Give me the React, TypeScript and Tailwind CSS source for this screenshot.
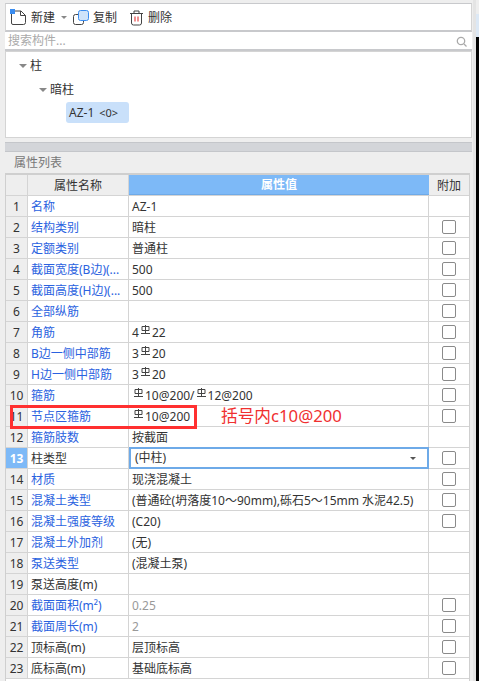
import { ReactNode } from "react";

const FONT = "font-['Noto_Sans','Noto_Sans_CJK_SC',sans-serif]";

function Rebar() {
  return (
    <svg width="11" height="11" viewBox="0 0 11 11" className="shrink-0 mx-px -mt-[4px]" fill="none" stroke="#444" strokeWidth="1">
      <path d="M2 1.5h7v4H2zM5.5 0v9M1 8.5h9" />
    </svg>
  );
}

interface Row {
  name: string;
  value?: ReactNode;
  blue?: boolean;
  gray?: boolean;
  check?: boolean;
}

const rows: Row[] = [
  { name: "名称", value: "AZ-1", blue: true },
  { name: "结构类别", value: "暗柱", blue: true, check: true },
  { name: "定额类别", value: "普通柱", blue: true, check: true },
  { name: "截面宽度(B边)(...", value: "500", blue: true, check: true },
  { name: "截面高度(H边)(...", value: "500", blue: true, check: true },
  { name: "全部纵筋", blue: true, check: true },
  { name: "角筋", value: <>4<Rebar />22</>, blue: true, check: true },
  { name: "B边一侧中部筋", value: <>3<Rebar />20</>, blue: true, check: true },
  { name: "H边一侧中部筋", value: <>3<Rebar />20</>, blue: true, check: true },
  { name: "箍筋", value: <><Rebar />10@200/<Rebar />12@200</>, blue: true, check: true },
  { name: "节点区箍筋", value: <><Rebar />10@200</>, blue: true, check: true },
  { name: "箍筋肢数", value: "按截面", blue: true },
  { name: "柱类型", value: "(中柱)", check: true },
  { name: "材质", value: "现浇混凝土", blue: true, check: true },
  { name: "混凝土类型", value: "(普通砼(坍落度10～90mm),砾石5～15mm 水泥42.5)", blue: true, check: true },
  { name: "混凝土强度等级", value: "(C20)", blue: true, check: true },
  { name: "混凝土外加剂", value: "(无)", blue: true },
  { name: "泵送类型", value: "(混凝土泵)", blue: true },
  { name: "泵送高度(m)" },
  { name: "截面面积(m²)", value: "0.25", blue: true, gray: true, check: true },
  { name: "截面周长(m)", value: "2", blue: true, gray: true, check: true },
  { name: "顶标高(m)", value: "层顶标高", check: true },
  { name: "底标高(m)", value: "基础底标高", check: true },
];

function Caret({ className }: { className: string }) {
  return <span className={`inline-block border-x-transparent ${className}`} />;
}

function PropertyRow({ row, index }: { row: Row; index: number }) {
  const active = index === 13;
  return (
    <div className="flex h-[21px] shrink-0 border-b border-[#d4d4d4]">
      <div className={`w-[22px] shrink-0 border-r border-[#d4d4d4] pt-px flex items-center justify-center ${active ? "bg-[#7db9f7] text-white font-bold" : "bg-[#eeeeee] text-[#333]"}`}>
        {index}
      </div>
      <div className={`w-[101px] shrink-0 border-r border-[#d4d4d4] pl-[3px] pt-px flex items-center whitespace-nowrap overflow-hidden ${row.blue ? "text-[#2a62e0]" : "text-[#333]"}`}>
        {row.name}
      </div>
      {active ? (
        <div className="w-[300px] shrink-0 border-2 border-[#6eaae8] -mt-px h-[22px] flex items-center justify-between pl-[4px] pr-[11px] text-[#333]">
          <span>{row.value}</span>
          <Caret className="border-x-[3px] border-t-[3px] border-t-[#555]" />
        </div>
      ) : (
        <div className={`w-[300px] shrink-0 border-r border-[#d4d4d4] pl-[3px] pt-px flex items-center whitespace-nowrap ${row.gray ? "text-[#999]" : "text-[#333]"}`}>
          {row.value}
        </div>
      )}
      <div className="flex-1 flex items-center justify-center">
        {row.check && <span className="w-[14px] h-[14px] rounded-[2px] border border-[#8a8a8a] bg-white" />}
      </div>
    </div>
  );
}

export default function App() {
  return (
    <div className={`${FONT} relative w-[479px] h-[681px] overflow-hidden bg-[#eeeeee] text-[12px] leading-none flex`}>
      <div className="w-[467px] ml-[5px] shrink-0 flex flex-col">
        {/* Toolbar */}
        <div className="mt-[3px] h-[29px] shrink-0 bg-white border border-[#d4d4d4] border-t-[#c8c9cc] border-b-2 border-b-[#c8c9cc] pt-px flex items-center pl-[4px] text-[#333]">
          <svg width="17" height="17" viewBox="0 0 17 17" fill="none">
            <path d="M1.5 3.5a1.5 1.5 0 0 1 1.5-1.5h8l4.5 4.5v7a2 2 0 0 1-2 2H3a1.5 1.5 0 0 1-1.5-1.5z" stroke="#444" />
            <path d="M10.5 2v4.5h5" stroke="#444" />
            <rect x="0" y="0" width="5" height="5" fill="#3b8df0" />
          </svg>
          <span className="ml-[4px]">新建</span>
          <Caret className="ml-[6px] border-x-[3px] border-t-[3px] border-t-[#888]" />
          <svg className="ml-[6px]" width="16" height="16" viewBox="0 0 16 16" fill="none">
            <rect x="0.5" y="4.5" width="10" height="10" rx="2" stroke="#444" />
            <rect x="5.5" y="0.5" width="10" height="10" rx="2" fill="#cfe3fa" stroke="#3b8df0" />
          </svg>
          <span className="ml-[4px]">复制</span>
          <svg className="ml-[12px]" width="15" height="16" viewBox="0 0 15 16" fill="none" stroke="#444">
            <path d="M1 3.5h13M5 3.5V1h5v2.5M2.5 3.5V13a2 2 0 0 0 2 2h6a2 2 0 0 0 2-2V3.5" />
            <path d="M6 6.5v5M9 6.5v5" stroke="#e02020" />
          </svg>
          <span className="ml-[4px]">删除</span>
        </div>
        {/* Search */}
        <div className="h-[19px] shrink-0 bg-white border-b-2 border-[#c8c9cc] pt-px flex items-center justify-between pl-[3px] pr-[5px] text-[#aaa]">
          <span>搜索构件...</span>
          <svg width="11" height="11" viewBox="0 0 11 11" fill="none" stroke="#aaa" strokeWidth="1.3">
            <circle cx="5" cy="5" r="3.7" />
            <path d="M8 8l2.5 2.5" />
          </svg>
        </div>
        {/* Tree */}
        <div className="h-[87px] shrink-0 bg-white border border-[#d4d4d4] text-[#333] flex flex-col items-start">
          <div className="flex items-center h-[22px] mt-[3px] pl-[13px] gap-[3px]">
            <Caret className="border-x-[4px] border-t-[4px] border-t-[#888]" />
            <span>柱</span>
          </div>
          <div className="flex items-center h-[22px] mt-[2px] pl-[33px] gap-[3px]">
            <Caret className="border-x-[4px] border-t-[4px] border-t-[#888]" />
            <span>暗柱</span>
          </div>
          <div className="mt-[1px] ml-[60px] h-[21px] w-[63px] shrink-0 rounded-[3px] bg-[#c9e0fa] flex items-center pl-[3px] gap-[5px]">
            <span>AZ-1</span>
            <span className="text-[11px]">&lt;0&gt;</span>
          </div>
        </div>
        {/* Property list */}
        <div className="mt-[4px] h-[10px] shrink-0 bg-[#d3d5d9] border-y border-[#c4c6ca]" />
        <div className="h-[21px] shrink-0 pt-px flex items-center pl-[9px] text-[#777]">属性列表</div>
        <div className="mr-[2px] border-x border-t-2 border-[#cfcfcf] bg-white flex-1 min-h-0 flex flex-col">
          <div className="flex h-[21px] shrink-0 border-b border-[#d4d4d4]">
            <div className="w-[22px] shrink-0 bg-[#eeeeee] border-r border-[#d4d4d4]" />
            <div className="w-[101px] shrink-0 bg-[#eeeeee] border-r border-[#d4d4d4] pt-px flex items-center justify-center text-[#333]">属性名称</div>
            <div className="w-[300px] shrink-0 bg-[#7db9f7] border-b border-[#6eaae8] pt-px flex items-center justify-center font-bold text-white">属性值</div>
            <div className="flex-1 bg-[#eeeeee] pt-px flex items-center justify-center text-[#333]">附加</div>
          </div>
          {rows.map((row, i) => (
            <PropertyRow key={i} row={row} index={i + 1} />
          ))}
        </div>
      </div>
      {/* Red annotation */}
      <div className="absolute left-[10px] top-[405px] w-[187px] h-[24px] border-[3px] border-[#ff3030]" />
      <div className="absolute left-[221px] top-[408px] text-[16.7px] text-[#f03030] whitespace-nowrap">括号内c10@200</div>
      {/* Right edge */}
      <div className="w-[3px] ml-[1px] shrink-0 bg-[#e4e4e4]" />
      <div className="flex-1 flex flex-col">
        <div className="h-[14px] bg-[#eeeeee]" />
        <div className="h-[23px] bg-[#dce8f5]" />
        <div className="flex-1 bg-black" />
      </div>
    </div>
  );
}
